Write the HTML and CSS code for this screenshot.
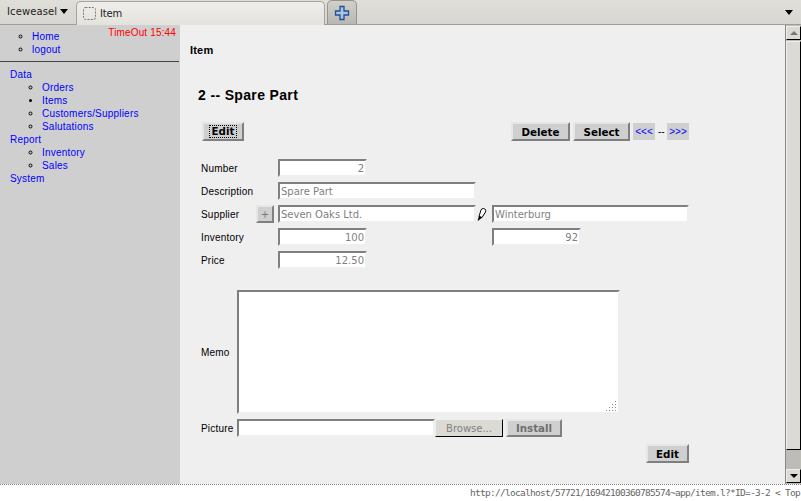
FILE: index.html
```html
<!DOCTYPE html>
<html lang="en">
<head>
<meta charset="utf-8">
<title>Item</title>
<link rel="stylesheet" href="styles.css">
</head>
<body>
<div class="browser">
  <header class="tabbar">
    <div class="appmenu"><span>Iceweasel</span><span class="tri"></span></div>
    <div class="tab">
      <svg class="favicon" width="15" height="15" viewBox="0 0 15 15"><rect x="1.500" y="1.500" width="12" height="12" rx="2" fill="none" stroke="#777" stroke-dasharray="2 1.200"/></svg>
      <span>Item</span>
    </div>
    <div class="newtab">
      <svg width="16" height="16" viewBox="0 0 16 16"><path d="M6 1.500h4v4.500h4.500v4H10v4.500H6V10H1.500V6H6z" fill="#a9c4e4" stroke="#1f4f94" stroke-width="1.300"/></svg>
    </div>
    <div class="tablist"><span class="tri"></span></div>
  </header>
  <div class="viewport">
    <nav class="sidebar">
      <div class="sidetop">
        <ul class="toplinks">
          <li><a href="#">Home</a></li>
          <li><a href="#">logout</a></li>
        </ul>
        <span class="timeout">TimeOut 15:44</span>
      </div>
      <div class="menu">
        <a href="#">Data</a>
        <ul>
          <li><a href="#">Orders</a></li>
          <li class="current"><a href="#">Items</a></li>
          <li><a href="#">Customers/Suppliers</a></li>
          <li><a href="#">Salutations</a></li>
        </ul>
        <a href="#">Report</a>
        <ul>
          <li><a href="#">Inventory</a></li>
          <li><a href="#">Sales</a></li>
        </ul>
        <a href="#">System</a>
      </div>
    </nav>
    <main class="content">
      <div class="pagetitle">Item</div>
      <h1>2 -- Spare Part</h1>
      <div class="form">
        <div class="actions">
          <button class="btn focused"><span>Edit</span></button>
          <div class="actions-right">
            <button class="btn">Delete</button>
            <button class="btn">Select</button>
            <a class="pager" href="#">&lt;&lt;&lt;</a>
            <span class="dash">--</span>
            <a class="pager" href="#">&gt;&gt;&gt;</a>
          </div>
        </div>
        <div class="rows">
          <div class="row"><label>Number</label><div class="field num">2</div></div>
          <div class="row"><label>Description</label><div class="field wide">Spare Part</div></div>
          <div class="row">
            <label class="short">Supplier</label>
            <button class="plus">+</button>
            <div class="field wide">Seven Oaks Ltd.</div>
            <svg class="pencil" width="12" height="15" viewBox="0 0 12 15"><path d="M5 3 Q5.500 1.500 7.500 1.500 L9.500 2.500 Q10 3.500 9.500 5 L6 10.500 L3 9.500z" fill="#fff" stroke="#000"/><path d="M3 9.500 L2 13.500 L6 10.500z" fill="#000" stroke="#000" stroke-width=".5"/></svg>
            <div class="field wide second">Winterburg</div>
          </div>
          <div class="row">
            <label>Inventory</label>
            <div class="field num">100</div>
            <div class="field num gap2">92</div>
          </div>
          <div class="row"><label>Price</label><div class="field num">12.50</div></div>
        </div>
        <div class="memo">
          <label>Memo</label>
          <div class="field area">
            <svg class="grip" width="11" height="11" viewBox="0 0 11 11"><g fill="#888"><rect x="9" y="0" width="1" height="1"/><rect x="9" y="3" width="1" height="1"/><rect x="6" y="3" width="1" height="1"/><rect x="9" y="6" width="1" height="1"/><rect x="6" y="6" width="1" height="1"/><rect x="3" y="6" width="1" height="1"/><rect x="9" y="9" width="1" height="1"/><rect x="6" y="9" width="1" height="1"/><rect x="3" y="9" width="1" height="1"/><rect x="0" y="9" width="1" height="1"/></g></svg>
          </div>
        </div>
        <div class="picture">
          <label>Picture</label>
          <div class="field file"></div>
          <button class="browse">Browse...</button>
          <button class="btn install">Install</button>
        </div>
        <div class="bottom"><button class="btn">Edit</button></div>
      </div>
    </main>
    <div class="scrollbar">
      <div class="sb-btn"><span class="up"></span></div>
      <div class="sb-thumb"></div>
      <div class="sb-track"></div>
      <div class="sb-btn"><span class="down"></span></div>
    </div>
  </div>
  <footer class="status">http://localhost/57721/16942100360785574~app/item.l?*ID=-3-2 &lt; Top</footer>
</div>
</body>
</html>
```
FILE: styles.css
```css
* { box-sizing: border-box; }
html, body { margin: 0; height: 100%; overflow: hidden; }
body { font: 10px "Liberation Sans", sans-serif; letter-spacing: .2px; color: #000; background: #fff; }
a { color: #00f; text-decoration: none; }
ul { margin: 0; padding: 0; }
label { display: block; }
.browser { display: flex; flex-direction: column; height: 501px; width: 801px; }

.tabbar { height: 25px; flex: none; display: flex; align-items: flex-end; background: linear-gradient(#e0ded9, #d8d6d1); border-bottom: 1px solid #a09e9a; font: 10px "DejaVu Sans", sans-serif; letter-spacing: 0; color: #222; }
.appmenu { width: 76px; height: 24px; padding: 0 0 2px 7px; display: flex; align-items: center; gap: 3px; letter-spacing: .1px; }
.tri { display: inline-block; width: 0; height: 0; border: 4.500px solid transparent; border-top: 5px solid #000; border-bottom: 0; }
.tab { width: 249px; height: 24px; margin-bottom: -1px; position: relative; background: linear-gradient(#efeeea, #e4e2dd); border: 1px solid #a5a39e; border-bottom: 0; border-radius: 5px 5px 0 0; display: flex; align-items: center; gap: 3px; padding: 0 0 1px 5px; letter-spacing: -.2px; }
.favicon { flex: none; }
.newtab { width: 30px; height: 24px; margin-left: 2px; background: linear-gradient(#d2d0cb, #b9b7b2); border: 1px solid #96948f; border-bottom: 0; border-radius: 5px 5px 0 0; display: flex; align-items: center; justify-content: center; }
.tablist { margin-left: auto; height: 23px; padding-right: 8px; display: flex; align-items: center; }

.viewport { flex: 1; display: flex; min-height: 0; }
.sidebar { width: 180px; flex: none; background: #cfcfcf; line-height: 13px; }
.sidetop { display: flex; justify-content: space-between; height: 37px; padding: 5px 3px 0 0; border-bottom: 1px solid #444; width: 179px; }
.toplinks { list-style: circle; padding: 0 0 0 32px; }
.timeout { color: #f00; line-height: 12px; margin-top: -3px; letter-spacing: .15px; }
.menu { padding: 6px 0 0 10px; }
.menu a { display: block; }
.menu ul { list-style: circle; padding-left: 32px; }
.menu li.current { list-style: disc; }

.content { flex: 1; min-width: 0; background: #efefef; padding: 19px 0 0 10px; }
.pagetitle { font: bold 11px/13px "Liberation Sans", sans-serif; letter-spacing: .2px; }
h1 { font: bold 14px/16px "Liberation Sans", sans-serif; letter-spacing: .35px; margin: 30px 0 0 8px; }
.form { margin: 19px 0 0 11px; width: 488px; }
.actions { display: flex; justify-content: space-between; align-items: center; height: 19px; }
.actions-right { display: flex; align-items: center; }
.btn { height: 19px; padding: 0 8px; font: bold 10.300px "DejaVu Sans", sans-serif; letter-spacing: 0; color: #000; background: #cfcfcf; border: 2px solid; border-color: #e6e6e6 #7f7f7f #7f7f7f #e6e6e6; }
.actions > .btn { margin-left: 1px; padding: 0 5px; width: 42px; }
.focused span { border: 1px dotted #000; display: block; line-height: 11px; height: 13px; }
.actions-right .btn:nth-child(1) { width: 59px; }
.actions-right .btn:nth-child(2) { width: 57px; margin-left: 3px; }
.pager { background: #cfcfcf; width: 22px; height: 17px; margin-left: 3px; text-align: center; line-height: 17px; letter-spacing: 0; }
.dash { width: 6px; margin-left: 3px; text-align: center; letter-spacing: 0; white-space: nowrap; }

.rows { margin-top: 18px; display: flex; flex-direction: column; gap: 5px; }
.row { display: flex; align-items: center; height: 18px; }
.row label { width: 77px; flex: none; }
.row label.short { width: 55px; }
.field { height: 18px; background: #fff; color: #7f7f7f; border: 2px solid; border-color: #7f7f7f #efefef #efefef #7f7f7f; padding: 0 1px 1px; font: 10px/15px "DejaVu Sans", sans-serif; letter-spacing: 0; white-space: nowrap; }
.num { width: 89px; text-align: right; }
.wide { width: 198px; }
.second { width: 197px; margin-left: 4px; }
.gap2 { margin-left: 125px; }
.plus { width: 18px; height: 18px; margin-right: 4px; padding: 0; background: #cfcfcf; color: #777; border: 2px solid; border-color: #e6e6e6 #7f7f7f #7f7f7f #e6e6e6; font: 10px "DejaVu Sans", sans-serif; }
.pencil { flex: none; }

.memo { margin-top: 21px; display: flex; align-items: center; }
.memo label { width: 36px; flex: none; }
.area { width: 383px; height: 124px; position: relative; }
.grip { position: absolute; right: 1px; bottom: 0; }
.picture { display: flex; align-items: center; margin-top: 5px; height: 18px; }
.picture label { width: 36px; flex: none; }
.field.file { width: 198px; flex: none; }
.browse { width: 68px; height: 18px; padding: 0; background: #dcdad5; color: #808080; border: 1px solid; border-color: #efefef #000 #000 #efefef; font: 10px "DejaVu Sans", sans-serif; }
.install { width: 56px; height: 18px; margin-left: 3px; padding: 0; color: #6f6f6f; }
.bottom { display: flex; justify-content: flex-end; margin-top: 7px; }
.bottom .btn { width: 43px; padding: 0; }

.scrollbar { width: 16px; flex: none; background: #bdbcb7; border-left: 1px solid #888; display: flex; flex-direction: column; }
.sb-btn { height: 14px; flex: none; margin: 1px 0; background: #dcdad5; border: 1px solid; border-color: #efefef #000 #000 #efefef; display: flex; align-items: center; justify-content: center; }
.up { width: 0; height: 0; border: 4px solid transparent; border-top: 0; border-bottom: 4px solid #777; }
.down { width: 0; height: 0; border: 4px solid transparent; border-bottom: 0; border-top: 4px solid #000; }
.sb-thumb { height: 409px; flex: none; background: #dcdad5; border: 1px solid; border-color: #efefef #000 #000 #efefef; }
.sb-track { flex: 1; }

.status { height: 17px; flex: none; border-top: 1px dotted #888; background: #fff; color: #666; text-align: right; padding: 1px 1px 0 0; font: 9.500px/14px "DejaVu Sans Mono", monospace; letter-spacing: -.72px; white-space: nowrap; }
```
